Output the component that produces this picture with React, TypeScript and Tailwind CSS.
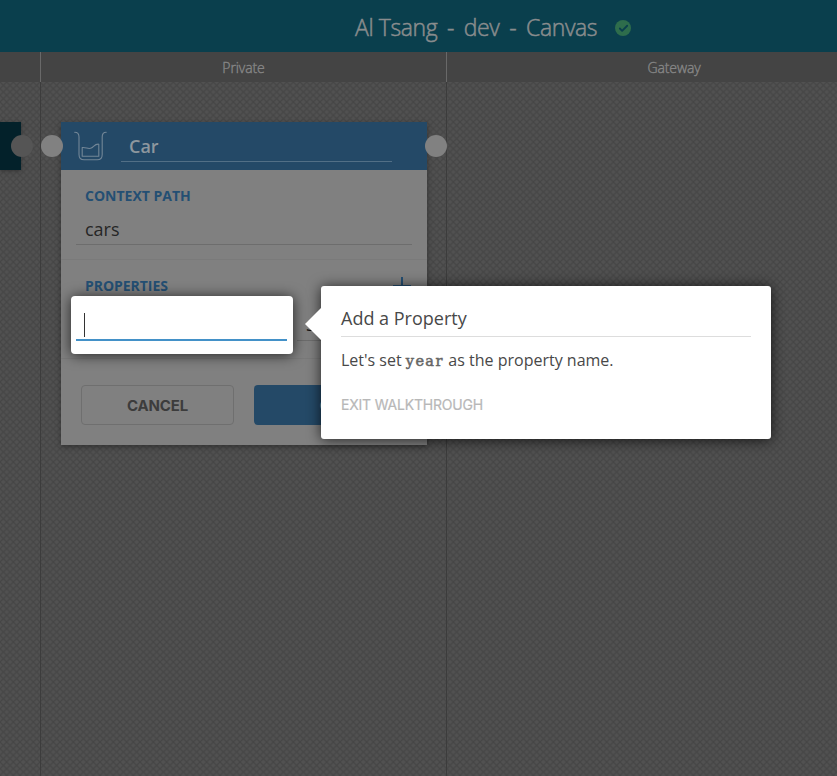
import React from "react";
import { Check } from "lucide-react";

function Port({ className }: { className: string }) {
  return <span className={`absolute top-[53px] z-10 size-[22px] rounded-full ${className}`} />;
}

function Beaker() {
  return (
    <svg className="shrink-0" width="33" height="31" viewBox="0 0 33 31" fill="none" stroke="#728697" strokeWidth="1.1" strokeLinecap="round" strokeLinejoin="round">
      <path d="M.7 1.2C4 1.2 5 3 5 6v17.5Q5 28.8 10.2 28.8h13Q28.2 28.8 28.2 23.5V6c0-3 1-4.8 4-4.8" />
      <path d="M8.2 16.5v8.8h16.6V13.2c-3.8-.4-4.8 2.2-7 3.6-3.5 2.3-5.3-.9-9.6-.3Z" />
    </svg>
  );
}

export default function App() {
  return (
    <div className="relative flex h-[776px] w-[837px] flex-col overflow-hidden bg-[#4d4d4d] font-['Open_Sans',sans-serif]">
      <header className="flex h-[52px] shrink-0 items-center bg-[#0a3f4d] pl-[355px] pt-0.5">
        <h1 className="w-[260px] whitespace-pre text-[23px] font-light leading-8 tracking-[-0.4px] text-[#898c8d] [-webkit-text-stroke:0.5px_#898c8d] [word-spacing:4.2px]"><span className="[word-spacing:0px]">Al Tsang</span> - dev - Canvas</h1>
        <span className="mt-0.5 flex size-4 items-center justify-center rounded-full bg-[#2e6d4c]">
          <Check size={11} strokeWidth={4} color="#0a3f4d" />
        </span>
      </header>

      <div className="flex h-[30px] shrink-0 bg-[#444] text-center text-[14px] font-light leading-[32px] tracking-[-0.1px] text-[#858585] [-webkit-text-stroke:0.4px_#858585]">
        <div className="w-[41px] shrink-0 border-r border-[#696969]" />
        <div className="w-[406px] shrink-0 border-r border-[#696969]">Private</div>
        <div className="w-[454px] shrink-0">Gateway</div>
      </div>

      <main className="relative flex grow">
        <svg className="absolute inset-0 size-full">
          <defs>
            <pattern id="mesh" width="6.667" height="6.667" patternUnits="userSpaceOnUse">
              <path d="M-1-1 8 8M-1 7.667 7.667-1" stroke="#464646" strokeWidth="1.3" />
            </pattern>
          </defs>
          <rect width="100%" height="100%" fill="#515151" />
          <rect width="100%" height="100%" fill="url(#mesh)" />
        </svg>
        <div className="relative w-[41px] shrink-0 border-r border-[#3c3c3c] pt-10">
          <div className="h-12 w-[21px] bg-[#03212a] shadow-[0_1px_4px_#2228]" />
          <Port className="left-[11px] bg-[#555]" />
        </div>
        <div className="relative w-[406px] shrink-0 border-r border-[#3c3c3c] pl-5 pt-10">
          <Port className="left-0 bg-[#818181]" />
          <Port className="-right-px bg-[#818181]" />
          <section className="h-[323px] w-[366px] bg-[#808080] shadow-[0_2px_5px_#2229]">
            <div className="flex h-12 items-start gap-[14px] bg-[#244967] pl-[13px] pt-[9px]">
              <Beaker />
              <div className="h-[31px] w-[271px] border-b border-[#526f86] pl-2 text-[18px] font-semibold leading-[30px] text-[#8e979e]">Car</div>
            </div>
            <div className="h-[90px] border-b border-[#7a7a7a] px-[15px] pt-[17px]">
              <h2 className="pl-[9px] text-[14px] font-bold leading-[18px] text-[#244f73]">CONTEXT PATH</h2>
              <div className="mt-[9px] h-[31px] border-b border-[#6d6d6d] pl-[9px] text-[18px] leading-[30px] text-[#262626]">cars</div>
            </div>
            <div className="h-[99px] border-b border-[#7a7a7a] pt-[17px]">
              <div className="flex h-[25px] justify-between pl-6 pr-4">
                <h2 className="text-[14px] font-bold leading-[18px] tracking-[-0.05px] text-[#244f73]">PROPERTIES</h2>
                <svg width="18" height="18"><path d="M9 0v18M0 9h18" stroke="#244f73" strokeWidth="2" /></svg>
              </div>
              <div className="ml-[236px] h-[39px] w-[115px] border-b border-[#6d6d6d] pl-[9px] text-[18px] leading-[44px] text-[#111]">string</div>
            </div>
            <div className="flex gap-5 px-5 pt-[26px] font-['Inter',sans-serif] text-[15px] font-bold tracking-[-0.15px]">
              <button className="h-10 w-[153px] rounded-sm border border-[#6f6f6f] pt-0.5 text-[#3c3c3c]">CANCEL</button>
              <button className="h-10 w-[153px] rounded-sm bg-[#244967] pt-0.5 text-[#8e979e]">OK</button>
            </div>
          </section>
        </div>
      </main>

      <div className="absolute left-[71px] top-[296px] z-20 h-[58px] w-[222px] rounded-[4px] bg-white px-[5px] shadow-[0_1px_14px_#000b]">
        <div className="h-[45px] w-[211px] border-b-2 border-[#4391c8] pl-2 pt-[17px]">
          <div className="h-6 w-px bg-[#333]" />
        </div>
      </div>

      <aside className="absolute left-[321px] top-[286px] z-30 h-[153px] w-[450px] rounded-[3px] bg-white px-5 text-[#484848] shadow-[0_1px_14px_#000b]">
        <span className="absolute -left-4 top-[22px] size-0 border-y-[16px] border-r-[16px] border-y-transparent border-r-white" />
        <h2 className="h-[51px] border-b border-[#ddd] pt-[17px] text-[18px] leading-[30px]">Add a Property</h2>
        <p className="pt-[11px] text-[16px] leading-6">Let's set <code className="inline-block w-[38.4px] font-['DejaVu_Serif',serif] text-[14.5px] leading-4 tracking-[1.4px] text-[#666] [-webkit-text-stroke:0.5px_#666]">year</code> as the property name.</p>
        <button className="mt-[23px] block whitespace-nowrap font-['Inter',sans-serif] text-[14px] leading-5 tracking-[-0.2px] text-[#b8b8b8] [-webkit-text-stroke:0.2px_#b8b8b8]">EXIT WALKTHROUGH</button>
      </aside>
    </div>
  );
}
